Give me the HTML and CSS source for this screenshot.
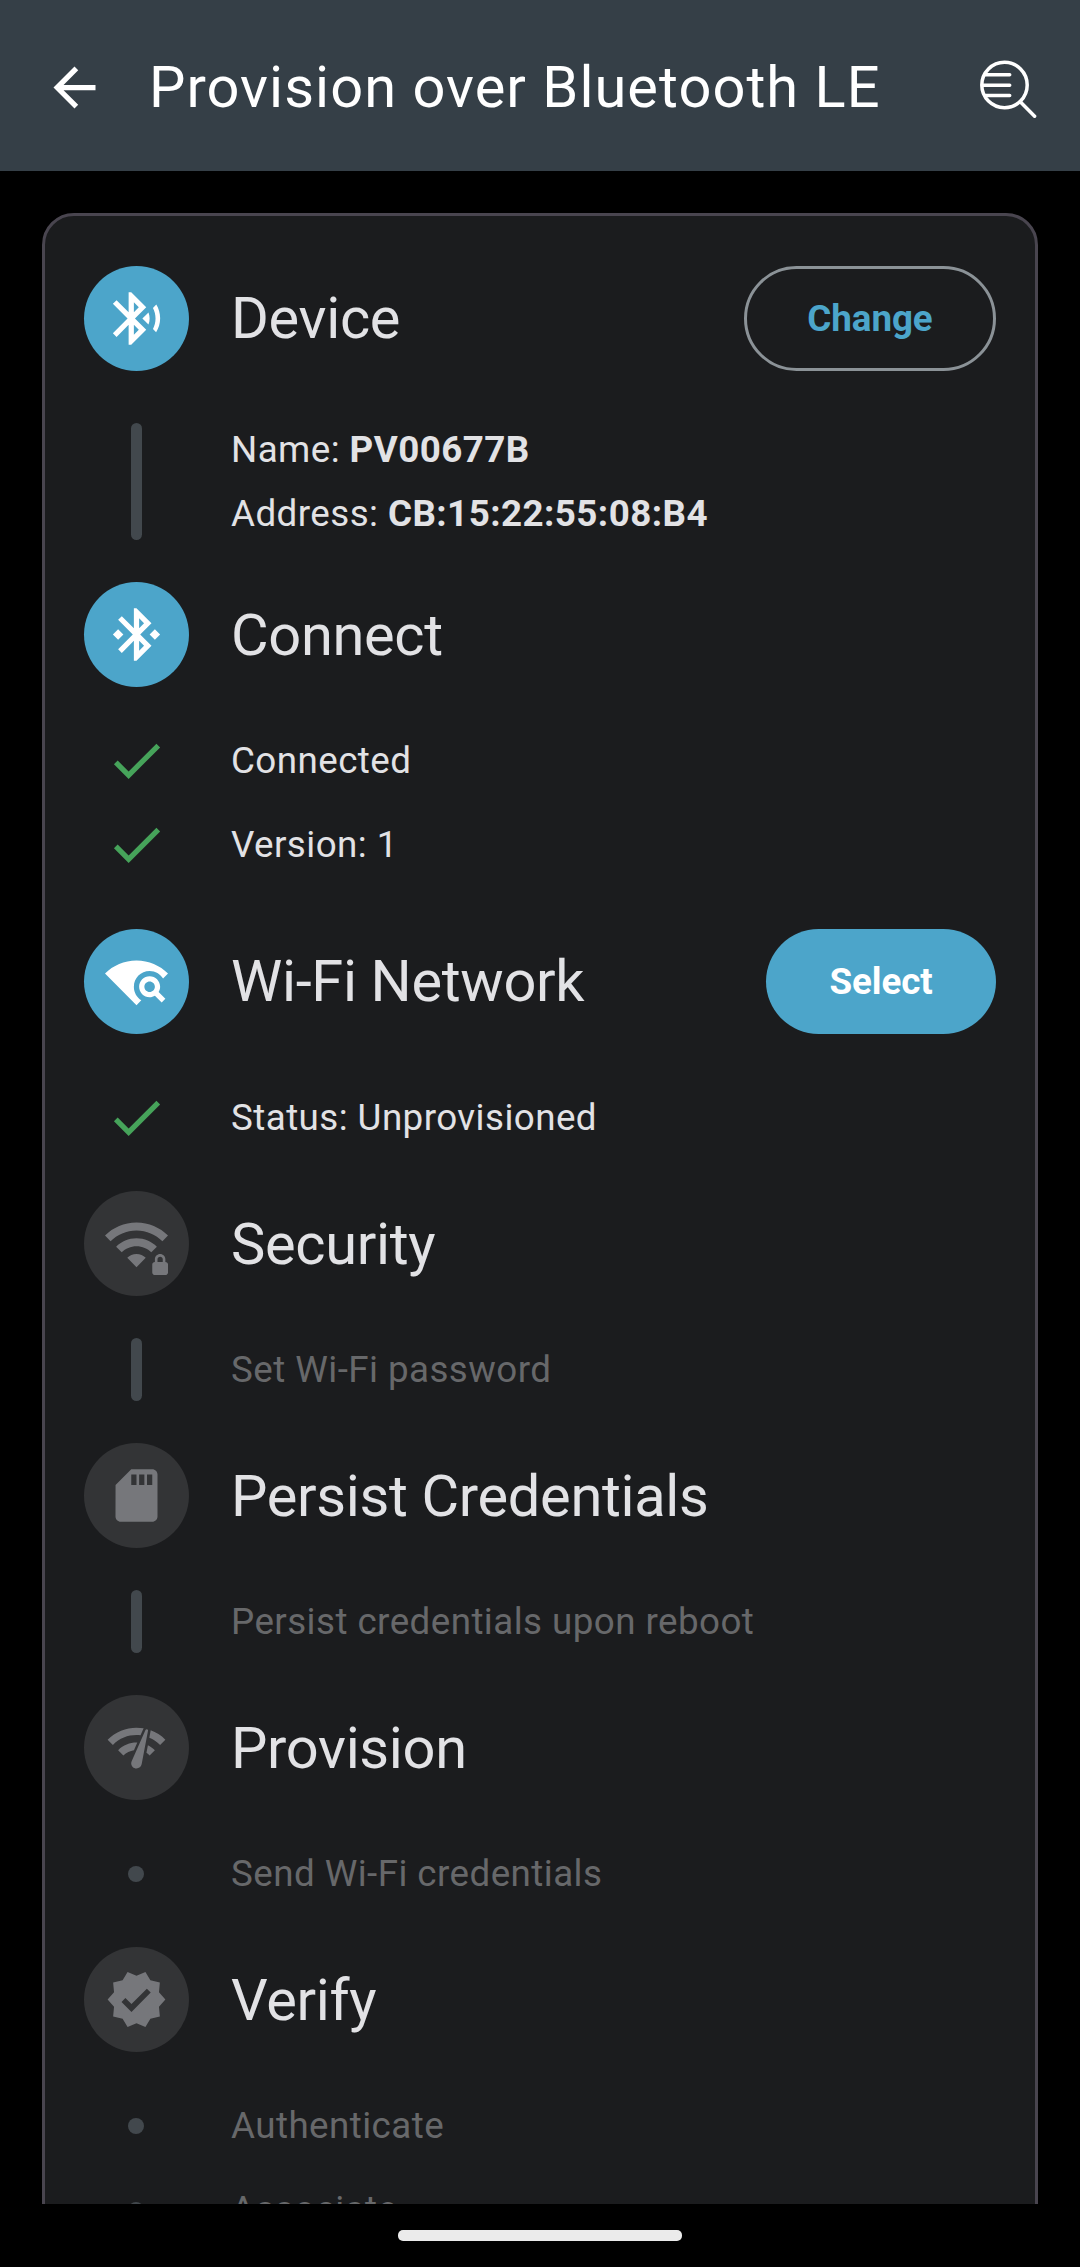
FILE: index.html
```html
<!DOCTYPE html>
<html lang="en">
<head>
<meta charset="utf-8">
<title>Provision over Bluetooth LE</title>
<link rel="stylesheet" href="styles.css">
</head>
<body>
<div class="screen">
  <header class="app-bar">
    <svg class="icon" viewBox="0 0 24 24"><path d="M20 11H7.83l5.59-5.59L12 4l-8 8 8 8 1.41-1.41L7.83 13H20v-2z"/></svg>
    <h1 class="title">Provision over Bluetooth LE</h1>
    <svg class="log-icon" viewBox="0 0 63 63"><circle cx="29.500" cy="29" r="22.700"/><path d="M10.500 18.800H34.700M8 29.300H34.700M10.500 39.500H34.700M45.500 46L59.600 60.200"/></svg>
  </header>
  <main class="content">
    <section class="card">
      <div class="step has-action">
        <span class="badge"><svg class="icon" viewBox="0 0 24 24"><path d="M14.24 12.01l2.32 2.32c.28-.72.44-1.51.44-2.33 0-.82-.16-1.59-.43-2.31l-2.33 2.32zm5.29-5.3l-1.26 1.26c.63 1.21.98 2.57.98 4.02s-.36 2.82-.98 4.02l1.2 1.2c.97-1.54 1.54-3.36 1.54-5.31-.01-1.89-.55-3.67-1.48-5.19zm-3.82 1L10 2H9v7.59L4.41 5 3 6.41 8.59 12 3 17.59 4.41 19 9 14.41V22h1l5.71-5.71-4.3-4.29 4.3-4.29zM11 5.83l1.88 1.88L11 9.59V5.83zm1.88 10.46L11 18.17v-3.76l1.88 1.88z"/></svg></span>
        <h2 class="heading">Device</h2>
        <button class="button outlined">Change</button>
      </div>
      <div class="details">
        <div class="row tall">
          <span class="marker"><i class="line"></i></span>
          <div class="lines">
            <p class="text">Name: <b>PV00677B</b></p>
            <p class="text">Address: <b>CB:15:22:55:08:B4</b></p>
          </div>
        </div>
      </div>

      <div class="step">
        <span class="badge"><svg class="icon" viewBox="0 0 24 24"><path d="M7 12l-2-2-2 2 2 2 2-2zm10.71-4.29L12 2h-1v7.59L6.41 5 5 6.41 10.590 12 5 17.590 6.410 19 11 14.410V22h1l5.710-5.710-4.300-4.290 4.300-4.290zM13 5.830l1.880 1.880L13 9.590V5.830zm1.880 10.460L13 18.170v-3.760l1.880 1.880zM19 10l-2 2 2 2 2-2-2-2z"/></svg></span>
        <h2 class="heading">Connect</h2>
      </div>
      <div class="details">
        <div class="row">
          <span class="marker"><svg class="icon done" viewBox="0 0 24 24"><path d="M9 16.17L4.83 12l-1.42 1.41L9 19 21 7l-1.41-1.41z"/></svg></span>
          <p class="text">Connected</p>
        </div>
        <div class="row">
          <span class="marker"><svg class="icon done" viewBox="0 0 24 24"><path d="M9 16.17L4.83 12l-1.42 1.41L9 19 21 7l-1.41-1.41z"/></svg></span>
          <p class="text">Version: 1</p>
        </div>
      </div>

      <div class="step has-action">
        <span class="badge"><svg class="icon" viewBox="0 0 24 24"><path d="M11 14c0-3.36 2.64-6 6-6 2.200 0 4.080 1.130 5.130 2.860L24 8.980C20.930 5.900 16.690 4 12 4S3.070 5.900 0 8.980L12 21l1.830-1.830C12.130 18.110 11 16.220 11 14zm10 0c0-2.210-1.790-4-4-4s-4 1.790-4 4 1.790 4 4 4c.740 0 1.430-.220 2.020-.570L21.590 20 23 18.590l-2.570-2.570c.350-.590.570-1.280.570-2.020zm-6 0c0-1.100.900-2 2-2s2 .900 2 2-.900 2-2 2-2-.900-2-2z"/></svg></span>
        <h2 class="heading">Wi-Fi Network</h2>
        <button class="button filled">Select</button>
      </div>
      <div class="details">
        <div class="row">
          <span class="marker"><svg class="icon done" viewBox="0 0 24 24"><path d="M9 16.17L4.83 12l-1.42 1.41L9 19 21 7l-1.41-1.41z"/></svg></span>
          <p class="text">Status: Unprovisioned</p>
        </div>
      </div>

      <div class="step">
        <span class="badge inactive"><svg class="icon" viewBox="0 0 24 24"><path d="M24 8.98C20.93 5.9 16.69 4 12 4S3.07 5.9 0 8.98l2.12 2.12C4.66 8.57 8.16 7 12 7s7.34 1.57 9.88 4.1L24 8.98zM4.24 13.22l2.12 2.12C7.8 13.9 9.8 13 12 13s4.2.9 5.64 2.34l2.12-2.12C17.77 11.23 15.02 10 12 10s-5.77 1.23-7.76 3.22zM8.48 17.47L12 21l3.52-3.53C14.62 16.56 13.38 16 12 16s-2.62.56-3.52 1.47zM23 19v-1c0-1.100-.900-2-2-2s-2 .900-2 2v1c-.550 0-1 .450-1 1v3c0 .550.450 1 1 1h4c.550 0 1-.450 1-1v-3c0-.550-.450-1-1-1zm-1 0h-2v-1c0-.550.450-1 1-1s1 .450 1 1v1z"/></svg></span>
        <h2 class="heading">Security</h2>
      </div>
      <div class="details">
        <div class="row">
          <span class="marker"><i class="line"></i></span>
          <p class="text muted">Set Wi-Fi password</p>
        </div>
      </div>

      <div class="step">
        <span class="badge inactive"><svg class="icon" viewBox="0 0 24 24"><path d="M18 2h-8L4.02 8 4 20c0 1.1.9 2 2 2h12c1.1 0 2-.9 2-2V4c0-1.1-.9-2-2-2zm-6 6h-2V4h2v4zm3 0h-2V4h2v4zm3 0h-2V4h2v4z"/></svg></span>
        <h2 class="heading">Persist Credentials</h2>
      </div>
      <div class="details">
        <div class="row">
          <span class="marker"><i class="line"></i></span>
          <p class="text muted">Persist credentials upon reboot</p>
        </div>
      </div>

      <div class="step">
        <span class="badge inactive"><svg class="icon" viewBox="0 0 24 24"><path d="M15.9 5c-.17 0-.32.09-.41.23l-.07.15-5.18 11.65c-.16.29-.26.61-.26.96 0 1.11.9 2.01 2.01 2.01.96 0 1.77-.68 1.96-1.59l.01-.03L16.4 5.5c0-.28-.22-.5-.5-.5zM1 9l2 2c2.88-2.88 6.79-4.08 10.53-3.62l1.19-2.68C9.89 3.84 4.74 5.27 1 9zm20 2l2-2c-1.64-1.64-3.55-2.82-5.59-3.57l-.53 2.82c1.5.62 2.9 1.53 4.12 2.75zm-4 4l2-2c-.8-.8-1.7-1.42-2.66-1.89l-.55 2.92c.42.27.83.59 1.21.97zM5 13l2 2c1.13-1.13 2.56-1.79 4.03-2l1.28-2.88c-2.63-.08-5.3.87-7.31 2.88z"/></svg></span>
        <h2 class="heading">Provision</h2>
      </div>
      <div class="details">
        <div class="row">
          <span class="marker"><i class="dot"></i></span>
          <p class="text muted">Send Wi-Fi credentials</p>
        </div>
      </div>

      <div class="step">
        <span class="badge inactive"><svg class="icon" viewBox="0 0 24 24"><path d="M23 12l-2.44-2.79.34-3.69-3.61-.82-1.89-3.2L12 2.960 8.600 1.500 6.710 4.690 3.100 5.500l.340 3.700L1 12l2.440 2.790-.340 3.700 3.610.820L8.600 22.500l3.400-1.470 3.400 1.460 1.890-3.190 3.610-.820-.340-3.690L23 12zm-12.910 4.720l-3.800-3.810 1.480-1.480 2.320 2.330 5.850-5.870 1.480 1.480-7.330 7.350z"/></svg></span>
        <h2 class="heading">Verify</h2>
      </div>
      <div class="details">
        <div class="row">
          <span class="marker"><i class="dot"></i></span>
          <p class="text muted">Authenticate</p>
        </div>
        <div class="row">
          <span class="marker"><i class="dot"></i></span>
          <p class="text muted">Associate</p>
        </div>
      </div>
    </section>
  </main>
  <footer class="nav-bar"><span class="handle"></span></footer>
</div>
</body>
</html>
```
FILE: styles.css
```css
* { box-sizing: border-box; }

body {
  margin: 0;
  background: #000;
  font-family: Roboto, sans-serif;
  color: #e2e2e5;
}

h1, h2, p { margin: 0; font-weight: 400; }

.screen {
  display: flex;
  flex-direction: column;
  height: 2267px;
  overflow: hidden;
}

.app-bar {
  display: flex;
  align-items: center;
  flex: 0 0 171px;
  padding: 3px 42px 0 43px;
  background: #353f47;
  color: #fff;
}

.title {
  flex: 1;
  margin-left: 43px;
  font-size: 57.75px;
  line-height: 74px;
  letter-spacing: 1.05px;
  white-space: nowrap;
}

.icon {
  display: block;
  width: 63px;
  height: 63px;
  fill: currentColor;
}

.log-icon {
  display: block;
  width: 63px;
  height: 63px;
  fill: none;
  stroke: currentColor;
  stroke-width: 3.5;
  stroke-linecap: round;
}

.content {
  flex: 1;
  min-height: 0;
  overflow: hidden;
  padding: 42px 42px 0;
}

.card {
  display: flex;
  flex-direction: column;
  gap: 42px;
  height: 2200px;
  padding: 39px;
  border: 3px solid #49454f;
  border-radius: 32px;
  background: #1b1c1e;
}

.step {
  display: flex;
  align-items: center;
  gap: 42px;
  height: 105px;
  flex-shrink: 0;
}

.has-action {
  height: 126px;
  padding: 11px 0 10px;
}

.badge {
  display: flex;
  align-items: center;
  justify-content: center;
  width: 105px;
  height: 105px;
  border-radius: 50%;
  background: #4ca5ca;
  color: #fff;
}

.badge.inactive {
  background: #333436;
  color: #76777b;
}

.heading {
  flex: 1;
  font-size: 57.75px;
  line-height: 74px;
  letter-spacing: -0.32px;
  white-space: nowrap;
}

.has-action .heading { margin-bottom: 2px; }

.button {
  height: 105px;
  padding: 0;
  border: 0;
  border-radius: 53px;
  font: 700 36.75px/53px Roboto, sans-serif;
  letter-spacing: -0.08px;
}

.outlined {
  width: 252px;
  border: 3px solid #8b9297;
  background: none;
  color: #4ca5ca;
}

.filled {
  width: 230px;
  background: #4ca5ca;
  color: #fff;
}

.details {
  display: flex;
  flex-direction: column;
  gap: 21px;
  flex-shrink: 0;
}

.row {
  display: flex;
  align-items: center;
  gap: 42px;
  height: 63px;
}

.row.tall { height: 117px; }

.lines {
  display: flex;
  flex-direction: column;
  gap: 11px;
}

.marker {
  display: flex;
  align-items: center;
  justify-content: center;
  width: 105px;
  height: 100%;
}

.done { color: #46a35a; }

.line {
  width: 11px;
  height: 100%;
  border-radius: 6px;
  background: #42484d;
}

.dot {
  width: 16px;
  height: 16px;
  margin-right: 1px;
  border-radius: 50%;
  background: #42484d;
}

.text {
  font-size: 36.75px;
  line-height: 53px;
  letter-spacing: 0.44px;
  white-space: nowrap;
}

.muted { color: #67686a; }

.nav-bar {
  display: flex;
  align-items: center;
  justify-content: center;
  flex: 0 0 63px;
}

.handle {
  width: 284px;
  height: 11px;
  border-radius: 5px;
  background: #ebebeb;
}
```
